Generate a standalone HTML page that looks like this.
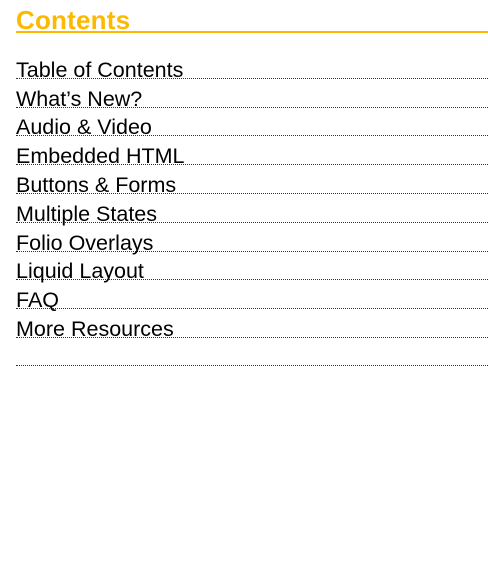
<!DOCTYPE html>
<html><head><style>
body{margin:0;width:488px;height:573px;background:#fff;font-family:"Liberation Sans",sans-serif;position:relative;overflow:hidden}
h1{position:absolute;left:16px;top:4px;margin:0;width:472px;height:27px;border-bottom:2px solid #fbb900;color:#fbb900;font-size:26px;font-weight:bold;line-height:32px;letter-spacing:0.2px}
.i{position:absolute;left:16px;width:472px;height:22px;padding-top:6px;border-bottom:1px dotted #333;font-size:21.5px;line-height:28px;color:#000;letter-spacing:0;white-space:nowrap}
</style></head><body>
<h1>Contents</h1>
<div class="i" style="top:50px">Table of Contents</div>
<div class="i" style="top:79px">What’s New?</div>
<div class="i" style="top:107px">Audio &amp; Video</div>
<div class="i" style="top:136px">Embedded HTML</div>
<div class="i" style="top:165px">Buttons &amp; Forms</div>
<div class="i" style="top:194px">Multiple States</div>
<div class="i" style="top:223px">Folio Overlays</div>
<div class="i" style="top:251px">Liquid Layout</div>
<div class="i" style="top:280px">FAQ</div>
<div class="i" style="top:309px">More Resources</div>
<div class="i" style="top:337px"></div>
</body></html>
